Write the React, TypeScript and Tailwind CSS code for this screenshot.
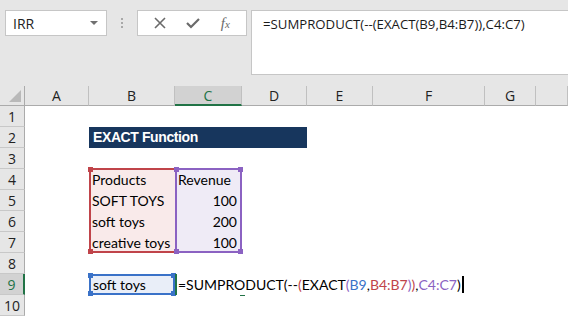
import React from 'react'

const cols = ['A', 'B', 'C', 'D', 'E', 'F', 'G', '']
const rows = [1, 2, 3, 4, 5, 6, 7, 8, 9, 10]

const cellFont = { fontFamily: 'Lato, "Liberation Sans", sans-serif' }
const uiFont = { fontFamily: '"Open Sans", "Noto Sans", sans-serif' }

const Handle: React.FC<{ color: string; pos: string }> = ({ color, pos }) => (
  <div className={`absolute w-[5px] h-[5px] ${color} ${pos}`} />
)

const App: React.FC = () => {
  return (
    <div className="w-[568px] h-[316px] overflow-hidden bg-white text-black">
      {/* toolbar */}
      <div className="h-[86px] bg-[#e6e6e6] flex items-start pt-[10px] pl-[5px]" style={uiFont}>
        <div className="w-[102px] h-[26px] bg-white border border-[#c6c6c6] flex items-center justify-between pl-[7px] pr-[8px]">
          <span className="text-[14px] text-[#222]">IRR</span>
          <span className="w-0 h-0 border-l-[4px] border-r-[4px] border-t-[4px] border-l-transparent border-r-transparent border-t-[#707070]" />
        </div>
        <div className="w-[30px] h-[26px] flex flex-col items-center justify-center gap-[2px]">
          <span className="w-[2px] h-[2px] bg-[#a8a8a8]" />
          <span className="w-[2px] h-[2px] bg-[#a8a8a8]" />
          <span className="w-[2px] h-[2px] bg-[#a8a8a8]" />
        </div>
        <div className="w-[110px] h-[26px] bg-white border border-[#c6c6c6] flex items-center justify-around px-[6px] text-[#6a6a6a]">
          <svg width="12" height="12" viewBox="0 0 12 12">
            <path d="M1 1 L11 11 M11 1 L1 11" stroke="#6a6a6a" strokeWidth="1.6" fill="none" />
          </svg>
          <svg width="14" height="12" viewBox="0 0 14 12">
            <path d="M1 6 L5 10 L13 2" stroke="#6a6a6a" strokeWidth="2.2" fill="none" />
          </svg>
          <span className="italic text-[15px] leading-none" style={{ fontFamily: '"Liberation Serif", serif' }}>
            f<span className="text-[11px]">x</span>
          </span>
        </div>
        <div className="ml-[4px] flex-1 h-[65px] bg-white border border-[#c6c6c6] border-r-0 pl-[11px] pt-[4px] text-[13.2px] text-[#1a1a1a] whitespace-nowrap">
          =SUMPRODUCT(--(EXACT(B9,B4:B7)),C4:C7)
        </div>
      </div>

      {/* sheet */}
      <div
        className="grid grid-cols-[25px_64px_86px_67px_65px_66px_112px_51px_1fr] grid-rows-[20px_repeat(10,21px)]"
        style={cellFont}
      >
        {/* corner */}
        <div className="col-start-1 row-start-1 bg-[#e6e6e6] border-b border-r border-[#ababab] relative">
          <svg className="absolute right-[3px] bottom-[3px]" width="12" height="12" viewBox="0 0 12 12">
            <path d="M12 0 L12 12 L0 12 Z" fill="#b9b9b9" />
          </svg>
        </div>
        {/* column headers */}
        {cols.map((c, i) => (
          <div
            key={c + i}
            className={`row-start-1 flex items-center justify-center text-[14px] ${
              c === 'C'
                ? 'bg-[#d2d2d2] text-[#217346] border-b-2 border-b-[#217346] border-r border-r-[#c0c0c0]'
                : 'bg-[#e6e6e6] text-[#222] border-b border-b-[#ababab] border-r border-r-[#c0c0c0]'
            }`}
            style={{ gridColumnStart: i + 2, ...uiFont }}
          >
            {c}
          </div>
        ))}
        {/* row headers */}
        {rows.map((r) => (
          <div
            key={r}
            className={`col-start-1 flex items-center justify-center text-[14px] border-b border-b-[#c8c8c8] ${
              r === 9
                ? 'bg-[#d2d2d2] text-[#217346] border-r-2 border-r-[#217346]'
                : 'bg-[#e6e6e6] text-[#222] border-r border-r-[#ababab]'
            }`}
            style={{ gridRowStart: r + 1, ...uiFont }}
          >
            {r}
          </div>
        ))}

        {/* title */}
        <div
          className="col-start-3 col-span-3 row-start-3 bg-[#17365d] text-white font-bold text-[14px] tracking-[-0.4px] flex items-center pl-[4px]"
          style={{ fontFamily: '"Liberation Sans", Arial, sans-serif' }}
        >
          EXACT Function
        </div>

        {/* table */}
        <div className="col-start-3 row-start-5 row-span-4 bg-[#f9eaea]" />
        <div className="col-start-4 row-start-5 row-span-4 bg-[#efebf6]" />
        {[
          ['Products', 'Revenue'],
          ['SOFT TOYS', '100'],
          ['soft toys', '200'],
          ['creative toys', '100'],
        ].map((row, i) => (
          <React.Fragment key={i}>
            <div
              className="col-start-3 flex items-center pl-[3px] text-[14px] whitespace-nowrap"
              style={{ gridRowStart: i + 5 }}
            >
              {row[0]}
            </div>
            <div
              className={`col-start-4 flex items-center text-[14px] ${i === 0 ? 'pl-[3px]' : 'justify-end pr-[5px]'}`}
              style={{ gridRowStart: i + 5 }}
            >
              {row[1]}
            </div>
          </React.Fragment>
        ))}

        {/* range B4:B7 */}
        <div className="col-start-3 row-start-5 row-span-4 relative border-2 border-r-0 border-[#c0444a] -mt-px">
          <Handle color="bg-[#c0444a]" pos="-left-[3px] -top-[3px]" />
          <Handle color="bg-[#c0444a]" pos="-left-[3px] -bottom-[3px]" />
        </div>
        {/* range C4:C7 */}
        <div className="col-start-4 row-start-5 row-span-4 relative border-2 border-[#8b62c2] -mt-px">
          <Handle color="bg-[#8b62c2]" pos="-left-[3px] -top-[3px]" />
          <Handle color="bg-[#8b62c2]" pos="-right-[3px] -top-[3px]" />
          <Handle color="bg-[#8b62c2]" pos="-left-[3px] -bottom-[3px]" />
          <Handle color="bg-[#8b62c2]" pos="-right-[3px] -bottom-[3px]" />
        </div>

        {/* B9 */}
        <div className="col-start-3 row-start-10 bg-[#e9eef8] border-2 border-[#3a72c8] relative flex items-center pl-[2px] text-[14px]">
          soft toys
          <Handle color="bg-[#3a72c8]" pos="-left-[3px] -top-[3px]" />
          <Handle color="bg-[#3a72c8]" pos="-right-[3px] -top-[3px]" />
          <Handle color="bg-[#3a72c8]" pos="-left-[3px] -bottom-[3px]" />
          <Handle color="bg-[#3a72c8]" pos="-right-[3px] -bottom-[3px]" />
        </div>

        {/* C9 active cell, editing */}
        <div className="col-start-4 row-start-10 relative border-y-2 border-l-2 border-[#217346] flex items-center text-[14px] whitespace-nowrap">
          <span className="pl-[1px] bg-white relative z-10 flex items-center">
            =SUMPRODUCT(--<span className="text-[#c0444a]">(</span>EXACT<span className="text-[#8b62c2]">(</span>
            <span className="text-[#3a72c8]">B9</span>,<span className="text-[#c0444a]">B4:B7</span>
            <span className="text-[#8b62c2]">)</span><span className="text-[#c0444a]">)</span>,
            <span className="text-[#8b62c2]">C4:C7</span>)
            <span className="ml-[1px] w-[2px] h-[17px] bg-black" />
          </span>
          <Handle color="bg-[#217346]" pos="-right-[3px] -bottom-[3px]" />
        </div>
      </div>
    </div>
  )
}

export default App
